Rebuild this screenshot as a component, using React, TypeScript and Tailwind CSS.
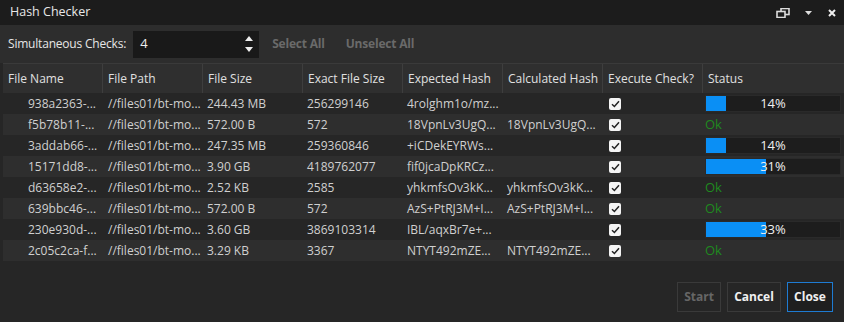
type Row = {
  name: string;
  path: string;
  size: string;
  exact: string;
  expected: string;
  calculated: string;
  status: { kind: 'ok' } | { kind: 'progress'; pct: number; fill: number };
};

const rows: Row[] = [
  { name: '938a2363-...', path: '//files01/bt-mo...', size: '244.43 MB', exact: '256299146', expected: '4rolghm1o/mz...', calculated: '', status: { kind: 'progress', pct: 14, fill: 20 } },
  { name: 'f5b78b11-...', path: '//files01/bt-mo...', size: '572.00 B', exact: '572', expected: '18VpnLv3UgQ...', calculated: '18VpnLv3UgQ...', status: { kind: 'ok' } },
  { name: '3addab66-...', path: '//files01/bt-mo...', size: '247.35 MB', exact: '259360846', expected: '+iCDekEYRWs...', calculated: '', status: { kind: 'progress', pct: 14, fill: 20 } },
  { name: '15171dd8-...', path: '//files01/bt-mo...', size: '3.90 GB', exact: '4189762077', expected: 'fif0jcaDpKRCz...', calculated: '', status: { kind: 'progress', pct: 31, fill: 60 } },
  { name: 'd63658e2-...', path: '//files01/bt-mo...', size: '2.52 KB', exact: '2585', expected: 'yhkmfsOv3kK...', calculated: 'yhkmfsOv3kK...', status: { kind: 'ok' } },
  { name: '639bbc46-...', path: '//files01/bt-mo...', size: '572.00 B', exact: '572', expected: 'AzS+PtRJ3M+I...', calculated: 'AzS+PtRJ3M+I...', status: { kind: 'ok' } },
  { name: '230e930d-...', path: '//files01/bt-mo...', size: '3.60 GB', exact: '3869103314', expected: 'IBL/aqxBr7e+...', calculated: '', status: { kind: 'progress', pct: 33, fill: 60 } },
  { name: '2c05c2ca-f...', path: '//files01/bt-mo...', size: '3.29 KB', exact: '3367', expected: 'NTYT492mZE...', calculated: 'NTYT492mZE...', status: { kind: 'ok' } },
];

const headers = ['File Name', 'File Path', 'File Size', 'Exact File Size', 'Expected Hash', 'Calculated Hash', 'Execute Check?', 'Status'];

const cols = 'grid grid-cols-[100px_100px_100px_100px_100px_100px_100px_1fr]';

const Check = () => (
  <div className="w-[12px] h-[12px] bg-[#f4f4f4] rounded-[2px] flex items-center justify-center">
    <svg width="9" height="8" viewBox="0 0 9 8">
      <path d="M1 4.2 L3.4 6.5 L8 1.2" stroke="#222" strokeWidth="1.5" fill="none" />
    </svg>
  </div>
);

const App = () => {
  return (
    <div
      className="w-[844px] h-[322px] bg-[#262626] text-[#dcdcdc] flex flex-col text-[12px]"
      style={{ fontFamily: '"Open Sans", "Noto Sans", sans-serif' }}
    >
      {/* otsikkopalkki */}
      <div className="h-[25px] bg-[#1c1c1c] flex items-center pl-[10px] pr-[8px]">
        <span className="text-[12.5px] text-[#e8e8e8] flex-1">Hash Checker</span>
        <svg width="14" height="10" viewBox="0 0 14 10" className="mr-[15px]">
          <rect x="5" y="0.5" width="8" height="6" fill="none" stroke="#ddd" strokeWidth="1.6" />
          <rect x="1" y="3.5" width="8" height="6" fill="#1c1c1c" stroke="#ddd" strokeWidth="1.6" />
        </svg>
        <svg width="7" height="4" viewBox="0 0 7 4" className="mr-[16px]">
          <path d="M0 0 L7 0 L3.5 4 Z" fill="#ddd" />
        </svg>
        <svg width="8" height="8" viewBox="0 0 8 8">
          <path d="M1 1 L7 7 M7 1 L1 7" stroke="#eee" strokeWidth="2" />
        </svg>
      </div>

      {/* työkalupalkki */}
      <div className="h-[38px] bg-[#2d2d2d] flex items-center pl-[8px]">
        <span className="text-[12px] text-[#e6e6e6] tracking-[-0.2px]">Simultaneous Checks:</span>
        <div className="ml-[7px] w-[126px] h-[27px] bg-[#191919] flex items-center pl-[7px] pr-[6px]">
          <span className="flex-1 text-[13px] text-[#eee]">4</span>
          <div className="flex flex-col items-center gap-[6px]">
            <svg width="8" height="5" viewBox="0 0 8 5" className="block"><path d="M0 5 L4 0 L8 5 Z" fill="#eee" /></svg>
            <svg width="8" height="5" viewBox="0 0 8 5" className="block"><path d="M0 0 L8 0 L4 5 Z" fill="#eee" /></svg>
          </div>
        </div>
        <span className="ml-[13px] font-bold text-[#6a6a6a] text-[12px] tracking-[-0.2px]">Select All</span>
        <span className="ml-[21px] font-bold text-[#6a6a6a] text-[12px] tracking-[-0.2px]">Unselect All</span>
      </div>

      {/* taulukko */}
      <div className="ml-[3px] flex flex-col">
        <div className={`${cols} h-[30px] bg-[#2f2f2f] border-t border-[#3a3a3a]`}>
          {headers.map((h, i) => (
            <div
              key={h}
              className={`flex items-center pl-[5px] text-[#e0e0e0] ${i < headers.length - 1 ? 'border-r border-[#3e3e3e]' : ''}`}
            >
              {h}
            </div>
          ))}
        </div>
        {rows.map((r, i) => (
          <div key={i} className={`${cols} h-[21px] items-center ${i % 2 === 0 ? 'bg-[#262626]' : 'bg-[#2e2e2e]'} text-[#d0d0d0]`}>
            <div className="pl-[25px] whitespace-nowrap">{r.name}</div>
            <div className="pl-[5px] whitespace-nowrap">{r.path}</div>
            <div className="pl-[4px] whitespace-nowrap">{r.size}</div>
            <div className="pl-[4px] whitespace-nowrap">{r.exact}</div>
            <div className="pl-[4px] whitespace-nowrap">{r.expected}</div>
            <div className="pl-[4px] whitespace-nowrap">{r.calculated}</div>
            <div className="pl-[6px]"><Check /></div>
            <div className="pl-[2px] pr-[3px]">
              {r.status.kind === 'ok' ? (
                <span className="text-[#1f8a1f] text-[13px]">Ok</span>
              ) : (
                <div className="relative h-[17px] bg-[#1d1d1d] border border-[#2a2a2a]">
                  <div className="h-full bg-[#0a8ff5]" style={{ width: r.status.fill }} />
                  <span className="absolute inset-0 flex items-center justify-center text-[13px] text-[#f0f0f0]">
                    {r.status.pct}%
                  </span>
                </div>
              )}
            </div>
          </div>
        ))}
      </div>

      {/* alapainikkeet */}
      <div className="flex-1 flex items-start justify-end pr-[11px] gap-[6px] pt-[21px]">
        <button className="h-[30px] w-[44px] border border-[#3a3a3a] bg-[#262626] text-[#666] font-bold">Start</button>
        <button className="h-[30px] w-[54px] border border-[#3a3a3a] bg-[#262626] text-[#f0f0f0] font-bold">Cancel</button>
        <button className="h-[30px] w-[46px] border border-[#1e7bd2] bg-[#1f1f1f] text-[#f0f0f0] font-bold">Close</button>
      </div>
    </div>
  );
};

export default App;
